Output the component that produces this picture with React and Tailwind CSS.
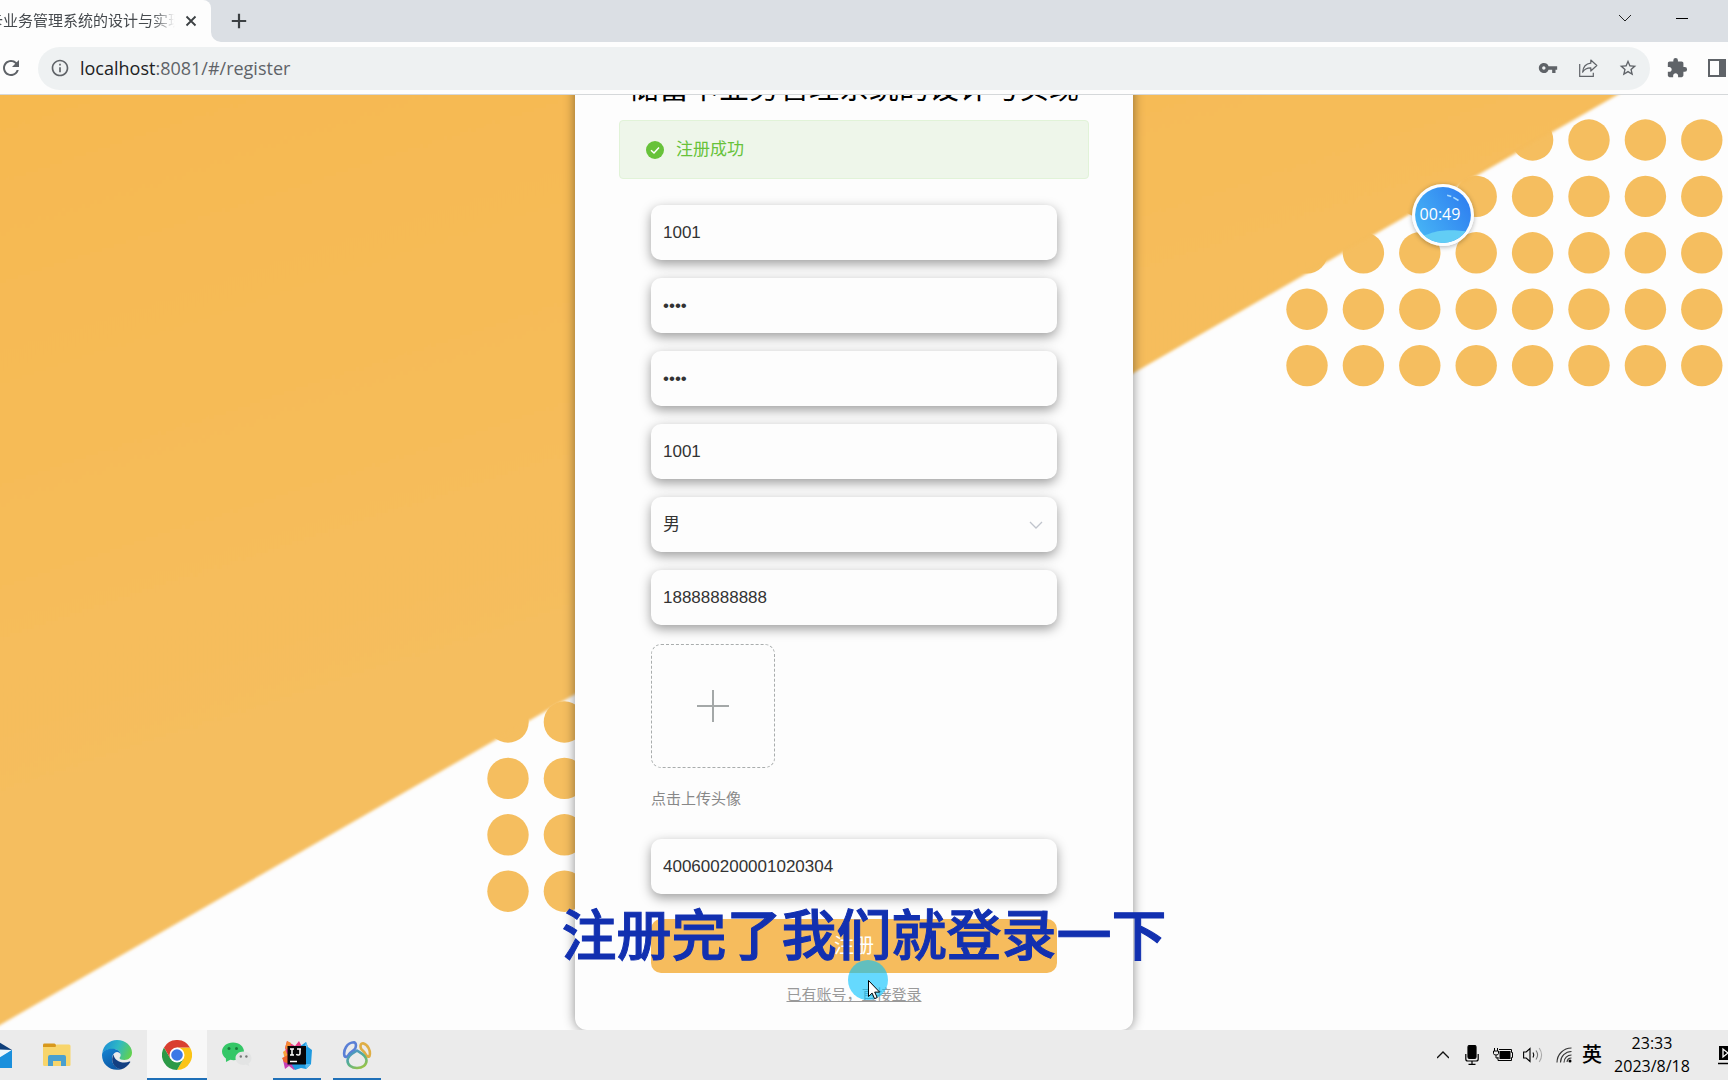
import { useState } from 'react'
import { MdRefresh, MdInfoOutline, MdVpnKey, MdStarBorder, MdExtension } from 'react-icons/md'

const TOP_FIELDS = [
  { name: 'account', label: '账号', type: 'text' },
  { name: 'password', label: '密码', type: 'password' },
  { name: 'confirm', label: '确认密码', type: 'password' },
  { name: 'realname', label: '姓名', type: 'text' },
]

const DOTS = [
  { x: 1307, y: 45, cols: 8, rows: 5 },
  { x: 508, y: 627, cols: 4, rows: 4 },
]

const FIELD = 'block h-[55px] w-full appearance-none rounded-[10px] bg-[#fdfdfd] px-3 text-[17px] text-[#333] shadow-[0_4px_12px_rgba(0,0,0,0.38)] outline-none'

function Backdrop() {
  return (
    <svg className="absolute inset-0 h-full w-full" viewBox="0 0 1728 935" preserveAspectRatio="xMidYMid slice" aria-hidden="true">
      <defs>
        <linearGradient id="sand" x1="0" y1="0" x2="0.45" y2="0.8">
          <stop offset="0" stopColor="#f6b84f" />
          <stop offset="0.8" stopColor="#f5be5f" />
        </linearGradient>
        <filter id="edge" x="-2%" y="-2%" width="104%" height="104%">
          <feGaussianBlur stdDeviation="1.4" />
        </filter>
      </defs>
      {DOTS.map(({ x, y, cols, rows }) =>
        Array.from({ length: cols * rows }, (_, i) => {
          const cx = x + (i % cols) * 56.4
          const cy = y + Math.floor(i / cols) * 56.4
          return <circle key={`${x}-${i}`} cx={cx} cy={cy} r="20.7" fill="#f5be5f" />
        })
      )}
      <path d="M-20 -20H1650L1617 0L0 930L-20 942Z" fill="url(#sand)" filter="url(#edge)" />
    </svg>
  )
}

function ShareIcon() {
  return (
    <svg className="size-5" viewBox="0 0 20 20" fill="none" stroke="#5f6368" strokeWidth="1.2">
      <path d="M1.700 6v12.300h13.600v-3.600" />
      <path d="M12.800 2l6 5.500-6 5.500V9.800c-3.200 0-6.400 1-8.200 4.400.5-5.200 3.900-8.500 8.200-9z" strokeLinejoin="round" />
    </svg>
  )
}

function MailIcon() {
  return (
    <svg className="size-[30px]" viewBox="0 0 30 30">
      <path d="M0 10L15 1l15 9v5H0z" fill="#0f3f7a" />
      <path d="M3 9l27 1v11H3z" fill="#eef6fc" />
      <path d="M0 10l15 10 15-10v18H0z" fill="#2bb0ee" />
      <path d="M0 28l30-18v18z" fill="#1a8fdc" />
    </svg>
  )
}

function FolderIcon() {
  return (
    <svg className="size-[30px]" viewBox="0 0 30 30">
      <path d="M1 6.500h12l1.500-2H27q1.500 0 1.500 1.500v19q0 1-1.500 1H2.500q-1.500 0-1.500-1.500z" fill="#f8d56b" />
      <path d="M1 7h12q1 0 1-1.500T12.500 3.600H2.500Q1 3.600 1 5z" fill="#d8981c" />
      <path d="M6 26V17q0-2 2-2h14q2 0 2 2v9h-5v-5h-8v5z" fill="#4aa0cf" />
    </svg>
  )
}

function EdgeIcon() {
  return (
    <svg className="size-[30px]" viewBox="0 0 30 30">
      <defs>
        <linearGradient id="edgeTop" x1="0" y1="0.3" x2="1" y2="0.6">
          <stop offset="0" stopColor="#1c8fd6" />
          <stop offset="0.5" stopColor="#2fb9c4" />
          <stop offset="1" stopColor="#62d14e" />
        </linearGradient>
        <linearGradient id="edgeLow" x1="0" y1="0" x2="0.5" y2="1">
          <stop offset="0" stopColor="#1585d4" />
          <stop offset="1" stopColor="#0c58a5" />
        </linearGradient>
      </defs>
      <path d="M.3 13C1.300 5.500 7.300 0 15 0c8.600 0 15 6 15 12.500 0 4.800-3.600 7.500-7.500 7.500-3.200 0-5-1-5-2 0-.8 1.200-1.200 1.200-3.300C18.700 11.600 15.500 9 11 9 5.600 9 1.500 11 .3 13z" fill="url(#edgeTop)" />
      <path d="M.3 13C1.500 10.500 5.500 8.700 10 8.700c5 0 8.700 2.600 8.700 6-.6-1.800-2-2.700-3.700-2.700-2.500 0-5 3-5 7 0 5.500 4.500 9.600 9.500 10.200C9 32 0 25 0 15z" fill="url(#edgeLow)" />
      <path d="M11.500 14.500C8 20 11.500 29 19.500 29.200c3.500-1 6.900-3.700 8.700-7 .3-.7-.3-1-.8-.7-1.400.7-3 1.100-4.900 1.100-6 0-10.300-3.300-11-8.100z" fill="#123f82" />
    </svg>
  )
}

function ChromeIcon() {
  return (
    <svg className="size-[30px]" viewBox="0 0 30 30">
      <path d="M15 7.500h13A15 15 0 0 1 15 30l6.500-11.200z" fill="#fbc416" />
      <path d="M21.500 18.700L15 30A15 15 0 0 1 2 7.500l6.500 11.300z" fill="#2c9a47" />
      <path d="M8.500 18.700L2 7.500A15 15 0 0 1 28 7.500H15z" fill="#d93f30" />
      <circle cx="15" cy="15" r="7.500" fill="#fff" />
      <circle cx="15" cy="15" r="5.800" fill="#3c79e6" />
    </svg>
  )
}

function WeChatIcon() {
  return (
    <svg className="size-[30px]" viewBox="0 0 30 30">
      <path d="M11 2.500C5 2.500 0 6.300 0 11.600c0 2.800 1.500 5.200 3.900 6.800L4 22l4.300-2.200c1 .3 2.100.4 3.200.4C17.500 20.200 22 16.400 22 11.600S17.500 2.500 11 2.500z" fill="#35c767" />
      <circle cx="7" cy="8.500" r="1.500" fill="#1a7a3c" />
      <circle cx="14.500" cy="8.500" r="1.500" fill="#1a7a3c" />
      <path d="M21.500 11.500c-4.700 0-8 2.900-8 6.700s3.300 6.700 8 6.700c.9 0 1.700-.1 2.500-.3l3.300 1.700-.7-2.800c1.800-1.200 2.900-3.100 2.900-5.300 0-3.800-3.300-6.700-8-6.700z" fill="#e3e4e4" />
      <circle cx="18.800" cy="16.500" r="1.200" fill="#777" />
      <circle cx="24.400" cy="16.500" r="1.200" fill="#777" />
    </svg>
  )
}

function IdeaIcon() {
  return (
    <svg className="size-[30px]" viewBox="0 0 30 30">
      <path d="M1 12l5-4 4 12-6 3z" fill="#f9a03a" />
      <path d="M5 1l8 5 4-5 3 6-3 12L5 14 3 8z" fill="#e93c87" />
      <path d="M5 1l4 2-2 8-4-3z" fill="#f58a35" />
      <path d="M1 20l5-3 10 9-4 4-5-4-4 3z" fill="#c63fb4" />
      <path d="M0 18l6-3 2 9-6-2z" fill="#f0652f" />
      <path d="M17 7l7-5 2 5 4 3-1 14-5 5-5-1-6 2-3-5z" fill="#1f9ae0" />
      <path d="M24 2l2 5-4 1zM29 24l-5 5-1-5z" fill="#59bdf2" />
      <rect x="5.500" y="6" width="18.500" height="18.500" fill="#060508" />
      <path d="M8 9h4M10 9v6M8 15h4M15 9h4M18 9v4.500q0 1.600-1.600 1.600T14.500 14" stroke="#fff" strokeWidth="1.500" fill="none" />
      <path d="M8 21.500h7" stroke="#fff" strokeWidth="1.500" />
    </svg>
  )
}

function NavicatIcon() {
  return (
    <svg className="size-[30px]" viewBox="0 0 30 30" fill="none" strokeWidth="2.600" strokeLinejoin="round">
      <defs>
        <linearGradient id="drop" x1="0.2" y1="0" x2="0.8" y2="1">
          <stop offset="0" stopColor="#4a8fd0" />
          <stop offset="0.5" stopColor="#55b090" />
          <stop offset="1" stopColor="#9cc445" />
        </linearGradient>
      </defs>
      <path d="M2.500 16C1 10 5 2.500 12 2.300c2.500.7 2.500 4.700.5 7.200-1.500 1.500-4 2-6 5.500-1 2-3.500 2.500-4 1z" stroke="#5a7fd6" />
      <path d="M27.500 16C29 11 26 4.500 21 3.300c-2.500 0-3.200 3-1.700 5.700 1 1.500 3 2 4.200 5 1 2.500 3.500 3.500 4 2z" stroke="#dfae45" />
      <path d="M15 10.500c-2 1.500-9.500 4.500-9.500 10C5.500 25 9.500 28 15 28s9.500-3 9.500-7.500c0-5.500-7.500-8.500-9.500-10z" stroke="url(#drop)" />
    </svg>
  )
}

const APPS = [
  { name: 'Mail', Icon: MailIcon },
  { name: 'File Explorer', Icon: FolderIcon },
  { name: 'Edge', Icon: EdgeIcon },
  { name: 'Chrome', Icon: ChromeIcon, active: true },
  { name: 'WeChat', Icon: WeChatIcon },
  { name: 'IntelliJ IDEA', Icon: IdeaIcon, running: true },
  { name: 'Navicat', Icon: NavicatIcon, running: true },
]

function TabStrip() {
  return (
    <header className="flex h-[42px] shrink-0 items-stretch bg-[#dbdfe4]">
      <div className="relative -ml-3 flex w-[223px] items-center justify-between rounded-tr-lg bg-[#fdfdfd] pr-3.5">
        <span className="w-[187px] overflow-hidden whitespace-nowrap text-[15px] text-[#45494d] [mask-image:linear-gradient(to_right,black_88%,transparent)]">
          卡业务管理系统的设计与实现
        </span>
        <button type="button" aria-label="Close tab">
          <svg className="size-3" viewBox="0 0 12 12" stroke="#3c4043" strokeWidth="1.800">
            <path d="M1.500 1.500l9 9M10.500 1.500l-9 9" />
          </svg>
        </button>
        <svg className="absolute bottom-0 left-full size-2.5" viewBox="0 0 10 10" fill="#fdfdfd">
          <path d="M0 0v10h10A10 10 0 0 1 0 0z" />
        </svg>
      </div>
      <button type="button" aria-label="New tab" className="ml-5">
        <svg className="size-4" viewBox="0 0 16 16" stroke="#3c4043" strokeWidth="2.200">
          <path d="M8 .8v14.400M.8 8h14.400" />
        </svg>
      </button>
      <div className="ml-auto flex items-center gap-[45px] pr-10 pb-1.5">
        <button type="button" aria-label="Search tabs">
          <svg className="size-3" viewBox="0 0 12 12" fill="none" stroke="#222" strokeWidth="1">
            <path d="M0 3l6 6 6-6" />
          </svg>
        </button>
        <button type="button" aria-label="Minimize" className="h-px w-3 bg-black" />
      </div>
    </header>
  )
}

function Toolbar() {
  return (
    <div className="flex h-[53px] shrink-0 items-center border-b border-[#d5d8da] bg-[#fdfdfd] text-[#5f6368]">
      <button type="button" aria-label="Reload" className="-ml-px">
        <MdRefresh className="size-6" />
      </button>
      <div className="ml-[15px] flex h-[43px] flex-1 items-center rounded-full bg-[#eef1f2] px-3">
        <MdInfoOutline className="size-5" />
        <p className="ml-2.5 font-['Open_Sans'] text-lg">
          <span className="text-[#202124]">localhost</span>:8081/#/register
        </p>
        <div className="ml-auto flex items-center gap-5">
          <button type="button" aria-label="Passwords"><MdVpnKey className="size-5" /></button>
          <button type="button" aria-label="Share"><ShareIcon /></button>
          <button type="button" aria-label="Bookmark"><MdStarBorder className="size-5" /></button>
        </div>
      </div>
      <button type="button" aria-label="Extensions" className="ml-4">
        <MdExtension className="size-[22px]" />
      </button>
      <button type="button" aria-label="Side panel" className="ml-5 pr-0.5">
        <svg className="size-[18px]" viewBox="0 0 18 18">
          <path d="M1 1h16v16H1z" fill="none" stroke="#5f6368" strokeWidth="2" />
          <path d="M11 1h6v16h-6z" fill="#5f6368" />
        </svg>
      </button>
    </div>
  )
}

function RegisterCard() {
  const [form, setForm] = useState({
    account: '1001',
    password: '1001',
    confirm: '1001',
    realname: '1001',
    sex: '男',
    phone: '18888888888',
    card: '400600200001020304',
  })

  function handleChange(e) {
    setForm(prev => ({ ...prev, [e.target.name]: e.target.value }))
  }

  return (
    <section className="relative w-[558px] rounded-xl bg-[#fdfdfd] px-11 pb-[23px] shadow-[0_0_12px_rgba(0,0,0,0.45)]">
      <h1 className="pt-12 text-center text-[30px] leading-10 text-black">储蓄卡业务管理系统的设计与实现</h1>
      <div role="alert" className="mt-3 flex h-[59px] items-center rounded border border-[#e1f3d8] bg-[#eef6ea] px-[26px] text-[17px] text-[#67c23a]">
        <svg className="size-[18px]" viewBox="0 0 18 18">
          <circle cx="9" cy="9" r="9" fill="#67c23a" />
          <path d="M5 9.200l3 2.800 5-5.500" fill="none" stroke="#fff" strokeWidth="1.500" />
        </svg>
        <span className="ml-3">注册成功</span>
      </div>
      <form className="mx-8 mt-[26px]" onSubmit={e => e.preventDefault()}>
        <div className="flex flex-col gap-[18px]">
          {TOP_FIELDS.map(f => (
            <input key={f.name} name={f.name} type={f.type} aria-label={f.label}
              value={form[f.name]} onChange={handleChange} className={FIELD} />
          ))}
          <div className="relative">
            <select name="sex" aria-label="性别" value={form.sex} onChange={handleChange} className={FIELD}>
              <option>男</option>
              <option>女</option>
            </select>
            <svg className="pointer-events-none absolute top-6 right-3.5 h-2 w-3.5" viewBox="0 0 14 8" fill="none" stroke="#c0c4cc" strokeWidth="1.300">
              <path d="M1 1l6 6 6-6" />
            </svg>
          </div>
          <input name="phone" type="text" aria-label="手机" value={form.phone} onChange={handleChange} className={FIELD} />
        </div>
        <label className="mt-[19px] flex size-[124px] cursor-pointer items-center justify-center rounded-[10px] border border-dashed border-[#a9adad]">
          <input type="file" aria-label="点击上传头像" className="sr-only" />
          <svg className="size-8" viewBox="0 0 32 32" stroke="#a4a8a8" strokeWidth="2">
            <path d="M16 0v32M0 16h32" />
          </svg>
        </label>
        <p className="mt-5 text-[15px] leading-[22px] text-[#888]">点击上传头像</p>
        <input name="card" type="text" aria-label="卡号" value={form.card} onChange={handleChange} className={`mt-[29px] ${FIELD}`} />
        <button type="submit" className="mt-[25px] h-[54px] w-full rounded-[10px] bg-[#f6bc5d] text-xl text-white">注册</button>
        <p className="mt-2.5 text-center text-[15px] leading-6">
          <a href="#/login" className="text-[#999] underline">已有账号，直接登录</a>
        </p>
      </form>
    </section>
  )
}

function TimerBadge() {
  return (
    <div className="absolute top-[89px] right-[254px] flex size-[62px] items-center justify-center rounded-full shadow-[0_1px_5px_rgba(0,0,0,0.3)]">
      <svg className="absolute inset-0" viewBox="0 0 60 60">
        <defs>
          <linearGradient id="timer" x1="0" y1="0.9" x2="1" y2="0.3">
            <stop offset="0" stopColor="#48b8f6" />
            <stop offset="1" stopColor="#2f80f0" />
          </linearGradient>
          <clipPath id="disc"><circle cx="30" cy="30" r="27" /></clipPath>
        </defs>
        <circle cx="30" cy="30" r="30" fill="#fbfdff" />
        <circle cx="30" cy="30" r="27" fill="url(#timer)" />
        <path d="M0 51c8 1 14-2 20-4s18-4 40 0v14H0z" fill="#62cdf5" clipPath="url(#disc)" />
        <path d="M34 11l4 1M40 13l5 3" stroke="#a8dcff" strokeWidth="1.500" />
      </svg>
      <span className="relative pr-1.5 pb-0.5 font-['Open_Sans'] text-base text-white">00:49</span>
    </div>
  )
}

function Pointer() {
  return (
    <svg className="pointer-events-none absolute bottom-[30px] left-1/2 -ml-4 size-10" viewBox="0 0 40 40">
      <circle cx="20" cy="20" r="20" fill="#00c1ff" fillOpacity="0.6" />
      <path d="M20.500 20.500v16l3.600-3.400 2.500 5.600 2.600-1.200-2.500-5.400h4.900z" fill="#fff" stroke="#000" />
    </svg>
  )
}

function Taskbar() {
  return (
    <footer className="relative flex h-[50px] shrink-0 items-stretch overflow-hidden bg-[#ebebeb] text-black">
      <nav className="-ml-[33px] flex">
        {APPS.map(({ name, Icon, active, running }) => (
          <button key={name} type="button" aria-label={name}
            className={`relative flex w-[60px] items-center justify-center ${active ? 'bg-[#f8f8f8]' : ''}`}>
            <Icon />
            {(active || running) && (
              <span className={`absolute bottom-0 h-0.5 bg-[#1f70b8] ${active ? 'inset-x-0' : 'inset-x-1.5'}`} />
            )}
          </button>
        ))}
      </nav>
      <div className="ml-auto flex items-center">
        <svg className="size-3" viewBox="0 0 12 12" fill="none" stroke="#111" strokeWidth="1.400">
          <path d="M0 9l6-6 6 6" />
        </svg>
        <svg className="ml-4 h-5 w-3.5" viewBox="0 0 14 20" fill="none" stroke="#000" strokeWidth="1.200">
          <rect x="3" y="0.500" width="8" height="13" rx="1.500" fill="#000" />
          <path d="M.8 9v5q0 2 2 2h8.400q2 0 2-2V9M7 16v3M3.500 19.300h7" />
        </svg>
        <svg className="ml-3.5 h-3.5 w-5" viewBox="0 0 20 14" fill="none" stroke="#000">
          <path d="M6 1.500h12.500v3h1v5h-1v3H5V9" />
          <rect x="7" y="3.500" width="10" height="7" fill="#000" />
          <path d="M1.500 0v3M4.500 0v3M.5 3h5v2.500q0 1.500-2.500 1.500T.5 5.500zM3 7v3h2" />
        </svg>
        <svg className="ml-2.5 h-4 w-[21px]" viewBox="0 0 21 16" fill="none" stroke="#000" strokeWidth="1.100">
          <path d="M.6 5v6h2.600L7 14.500v-13L3.200 5z" />
          <path d="M10 5.500q1.600 2.500 0 5" />
          <path d="M13 3.500q3.200 4.500 0 9" stroke="#777" />
          <path d="M16.200 1q4.800 7 0 14" stroke="#aaa" />
        </svg>
        <svg className="ml-3 size-4" viewBox="0 0 16 16" fill="none" stroke="#333" strokeWidth="1.100">
          <path d="M1 15.500A14.500 14.500 0 0 1 15.500 1M4.500 15.500A11 11 0 0 1 15.500 4.500M8 15.500A7.500 7.500 0 0 1 15.500 8" />
          <path d="M11 15A4.500 4.500 0 0 1 15.500 11" />
          <circle cx="14" cy="14" r="1.500" fill="#000" stroke="none" />
        </svg>
        <span className="ml-2.5 text-xl font-medium">英</span>
        <p className="ml-3 w-[76px] text-center font-['Open_Sans'] text-base leading-[23px]">
          23:33<br />2023/8/18
        </p>
        <svg className="-mr-2.5 ml-7 h-5 w-5" viewBox="0 0 20 20">
          <path d="M1 1h19v14H1z" />
          <path d="M0 18.500h20" stroke="#000" strokeWidth="1.500" />
          <path d="M5 4v8l5-4z" fill="none" stroke="#fff" strokeWidth="1.300" />
        </svg>
      </div>
    </footer>
  )
}

export default function App() {
  return (
    <div className="flex h-screen flex-col overflow-hidden bg-[#fdfdfd] font-['Liberation_Sans','Noto_Sans_CJK_SC',sans-serif]">
      <TabStrip />
      <Toolbar />
      <main className="relative flex min-h-0 flex-1 items-end justify-center overflow-hidden pr-5">
        <Backdrop />
        <RegisterCard />
        <TimerBadge />
        <p className="pointer-events-none absolute inset-x-0 bottom-[54px] text-center text-[55px] leading-[80px] font-medium text-[#1230b0] [-webkit-text-stroke:1px_#1230b0]">
          注册完了我们就登录一下
        </p>
        <Pointer />
      </main>
      <Taskbar />
    </div>
  )
}
